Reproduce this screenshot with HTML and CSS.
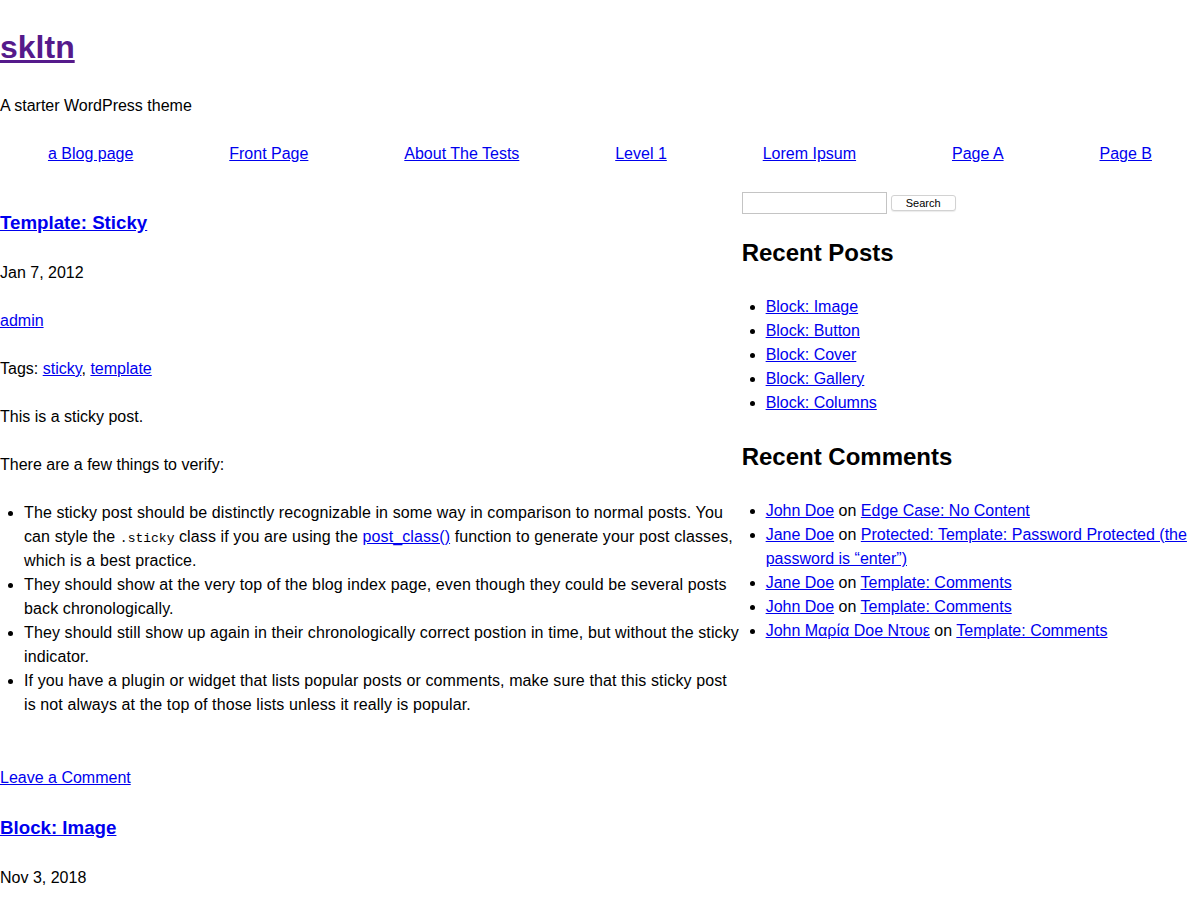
FILE: index.html
```html
<!DOCTYPE html>
<html lang="en">
<head>
<meta charset="utf-8">
<title>skltn – A starter WordPress theme</title>
<link rel="stylesheet" href="styles.css">
</head>
<body>
<header class="site-header">
  <h1 class="site-title"><a href="#">skltn</a></h1>
  <p class="site-description">A starter WordPress theme</p>
  <nav class="main-nav">
    <ul class="menu">
      <li><a href="#">a Blog page</a></li>
      <li><a href="#">Front Page</a></li>
      <li><a href="#">About The Tests</a></li>
      <li><a href="#">Level 1</a></li>
      <li><a href="#">Lorem Ipsum</a></li>
      <li><a href="#">Page A</a></li>
      <li><a href="#">Page B</a></li>
    </ul>
  </nav>
</header>
<main class="site-main">
  <section class="content">
    <article class="post">
      <h2 class="entry-title"><a href="#">Template: Sticky</a></h2>
      <p>Jan 7, 2012</p>
      <p><a href="#">admin</a></p>
      <p>Tags: <a href="#">sticky</a>, <a href="#">template</a></p>
      <div class="entry-content">
        <p>This is a sticky post.</p>
        <p>There are a few things to verify:</p>
        <ul class="entry-list">
          <li>The sticky post should be distinctly recognizable in some way in comparison to normal posts. You can style the <code>.sticky</code> class if you are using the <a href="#">post_class()</a> function to generate your post classes, which is a best practice.</li>
          <li>They should show at the very top of the blog index page, even though they could be several posts back chronologically.</li>
          <li>They should still show up again in their chronologically correct postion in time, but without the sticky indicator.</li>
          <li>If you have a plugin or widget that lists popular posts or comments, make sure that this sticky post is not always at the top of those lists unless it really is popular.</li>
        </ul>
      </div>
      <footer class="entry-footer">
        <p><a href="#">Leave a Comment</a></p>
      </footer>
    </article>
    <article class="post">
      <h2 class="entry-title"><a href="#">Block: Image</a></h2>
      <p>Nov 3, 2018</p>
    </article>
  </section>
  <aside class="sidebar">
    <form class="search-form">
      <input class="search-field" type="search" aria-label="Search">
      <button class="search-submit" type="button">Search</button>
    </form>
    <section class="widget">
      <h2 class="widget-title">Recent Posts</h2>
      <ul class="widget-list">
        <li><a href="#">Block: Image</a></li>
        <li><a href="#">Block: Button</a></li>
        <li><a href="#">Block: Cover</a></li>
        <li><a href="#">Block: Gallery</a></li>
        <li><a href="#">Block: Columns</a></li>
      </ul>
    </section>
    <section class="widget">
      <h2 class="widget-title">Recent Comments</h2>
      <ul class="widget-list">
        <li><a href="#">John Doe</a> on <a href="#">Edge Case: No Content</a></li>
        <li><a href="#">Jane Doe</a> on <a href="#">Protected: Template: Password Protected (the password is “enter”)</a></li>
        <li><a href="#">Jane Doe</a> on <a href="#">Template: Comments</a></li>
        <li><a href="#">John Doe</a> on <a href="#">Template: Comments</a></li>
        <li><a href="#">John Μαρία Doe Ντουε</a> on <a href="#">Template: Comments</a></li>
      </ul>
    </section>
  </aside>
</main>
</body>
</html>
```
FILE: styles.css
```css
html, body {
  background: #fff;
}
body {
  margin: 0;
  font-family: "Liberation Sans", Helvetica, Arial, sans-serif;
  font-size: 16px;
  line-height: 1.5;
  color: #000;
}
a {
  color: #0000ee;
  text-decoration: underline;
}
p {
  margin: 0 0 24px;
}
.site-title {
  margin: 23px 0 23px;
  font-size: 32px;
  line-height: 48px;
  font-weight: bold;
}
.site-title a {
  color: #551a8b;
}
.site-description {
  margin: 0 0 24px;
}
.menu {
  display: flex;
  justify-content: space-around;
  list-style: none;
  margin: 0 0 24px;
  padding: 0;
}
.site-main {
  display: grid;
  grid-template-columns: 1.618fr 1fr;
}
.content {
  padding-top: 19px;
  min-width: 0;
}
.entry-title {
  margin: 0 0 24px;
  font-size: 18.72px;
  line-height: 28px;
  font-weight: bold;
}
.entry-list {
  margin: 0 0 24px;
  padding-left: 24px;
  letter-spacing: 0.11px;
}
.entry-list code {
  font-family: "Liberation Mono", "Courier New", monospace;
  font-size: 13px;
  letter-spacing: 0;
}
.entry-footer {
  padding-top: 25px;
}
.sidebar {
  min-width: 0;
}
.search-form {
  display: flex;
  align-items: center;
  gap: 4px;
  margin: 0 0 21px;
  padding-top: 2px;
  height: 24px;
  box-sizing: border-box;
}
.search-field {
  box-sizing: border-box;
  width: 145px;
  height: 22px;
  margin: 0;
  border: 1px solid #c4c4c4;
  padding: 1px 3px;
  font-size: 13px;
  background: #fff;
}
.search-submit {
  box-sizing: border-box;
  width: 65px;
  height: 16px;
  margin: 0;
  padding: 0;
  border: 1px solid #d2d2d2;
  border-radius: 3px;
  background: #fff;
  box-shadow: 0 1px 1px rgba(0,0,0,0.08);
  font-family: "Liberation Sans", Helvetica, Arial, sans-serif;
  font-size: 11px;
  line-height: 14px;
  color: #000;
}
.widget-title {
  margin: 0 0 24px;
  font-size: 24px;
  line-height: 36px;
  font-weight: bold;
}
.widget-list {
  margin: 0 0 24px;
  padding-left: 24px;
}
```
